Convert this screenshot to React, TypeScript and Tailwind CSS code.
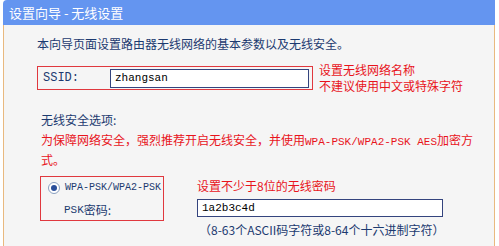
export default function App() {
  const cjk = { fontFamily: '"Noto Sans CJK SC", "Noto Sans", sans-serif' };
  const mono = { fontFamily: '"Liberation Mono", "Noto Sans CJK SC", monospace' };

  return (
    <div className="w-[499px] h-[246px] overflow-hidden bg-white" style={cjk}>
      <div className="ml-[3px] w-[492px] h-[246px] flex flex-col">
        <div className="shrink-0 h-[25px] bg-[#6495f0] rounded-tl-[4px] pl-[6px] text-white text-[13px] leading-[25px]">
          设置向导 - 无线设置
        </div>
        <div className="flex-1 bg-[#f5f5f5] border-x border-[#e9b97f] pl-[33px] text-[12px] leading-[18px] text-[#1c3a70]">
          <p className="mt-[10px]">本向导页面设置路由器无线网络的基本参数以及无线安全。</p>

          <div className="mt-[9px] flex items-center">
            <div className="w-[276px] h-[24px] border border-[#e0383e] flex items-center pl-[5px]">
              <span className="w-[67px] text-[12px]" style={mono}>SSID:</span>
              <div className="w-[199px] h-[19px] border border-[#34447e] bg-white flex items-center pl-[4px] text-[11px] text-black" style={mono}>
                zhangsan
              </div>
            </div>
            <div className="ml-[6px] text-[#e8141c] text-[12px] leading-[16px]">
              <p>设置无线网络名称</p>
              <p>不建议使用中文或特殊字符</p>
            </div>
          </div>

          <p className="mt-[17px] pl-[4px]">无线安全选项:</p>
          <p className="mt-[2px] pl-[4px] text-[#e8141c] whitespace-nowrap">
            为保障网络安全，强烈推荐开启无线安全，并使用
            <span className="text-[11px]" style={mono}>WPA-PSK/WPA2-PSK AES</span>
            加密方
            <br />
            式。
          </p>

          <div className="mt-[7px] flex pl-[3px]">
            <div className="shrink-0 w-[124px] h-[45px] border border-[#e0383e] pl-[7px] pt-[2px]">
              <div className="flex items-center h-[18px]">
                <span className="w-[12px] h-[12px] rounded-full border border-[#8aa0c0] bg-white flex items-center justify-center">
                  <span className="w-[6px] h-[6px] rounded-full bg-[#2a4f9a]" />
                </span>
                <span className="ml-[5px] text-[10px] whitespace-nowrap" style={mono}>WPA-PSK/WPA2-PSK</span>
              </div>
              <div className="mt-[4px] h-[18px] pl-[16px] flex items-center">
                <span className="text-[11px]" style={mono}>PSK</span>
                <span>密码:</span>
              </div>
            </div>
            <div className="ml-[33px] pt-[1px]">
              <p className="text-[#e8141c]">设置不少于8位的无线密码</p>
              <div className="mt-[4px] w-[246px] h-[18px] border border-[#34447e] bg-white flex items-center pl-[4px] text-[11px] text-black" style={mono}>
                1a2b3c4d
              </div>
              <p className="mt-[4px] pl-[2px]">（8-63个ASCII码字符或8-64个十六进制字符）</p>
            </div>
          </div>

          <div className="mt-[6px] pl-[12px] flex items-center">
            <span className="w-[12px] h-[12px] rounded-full border border-[#a0a8b4] bg-[#e8e8e8]" />
            <span className="ml-[8px] text-[13px]">不开启无线安全</span>
          </div>
        </div>
      </div>
    </div>
  );
}
